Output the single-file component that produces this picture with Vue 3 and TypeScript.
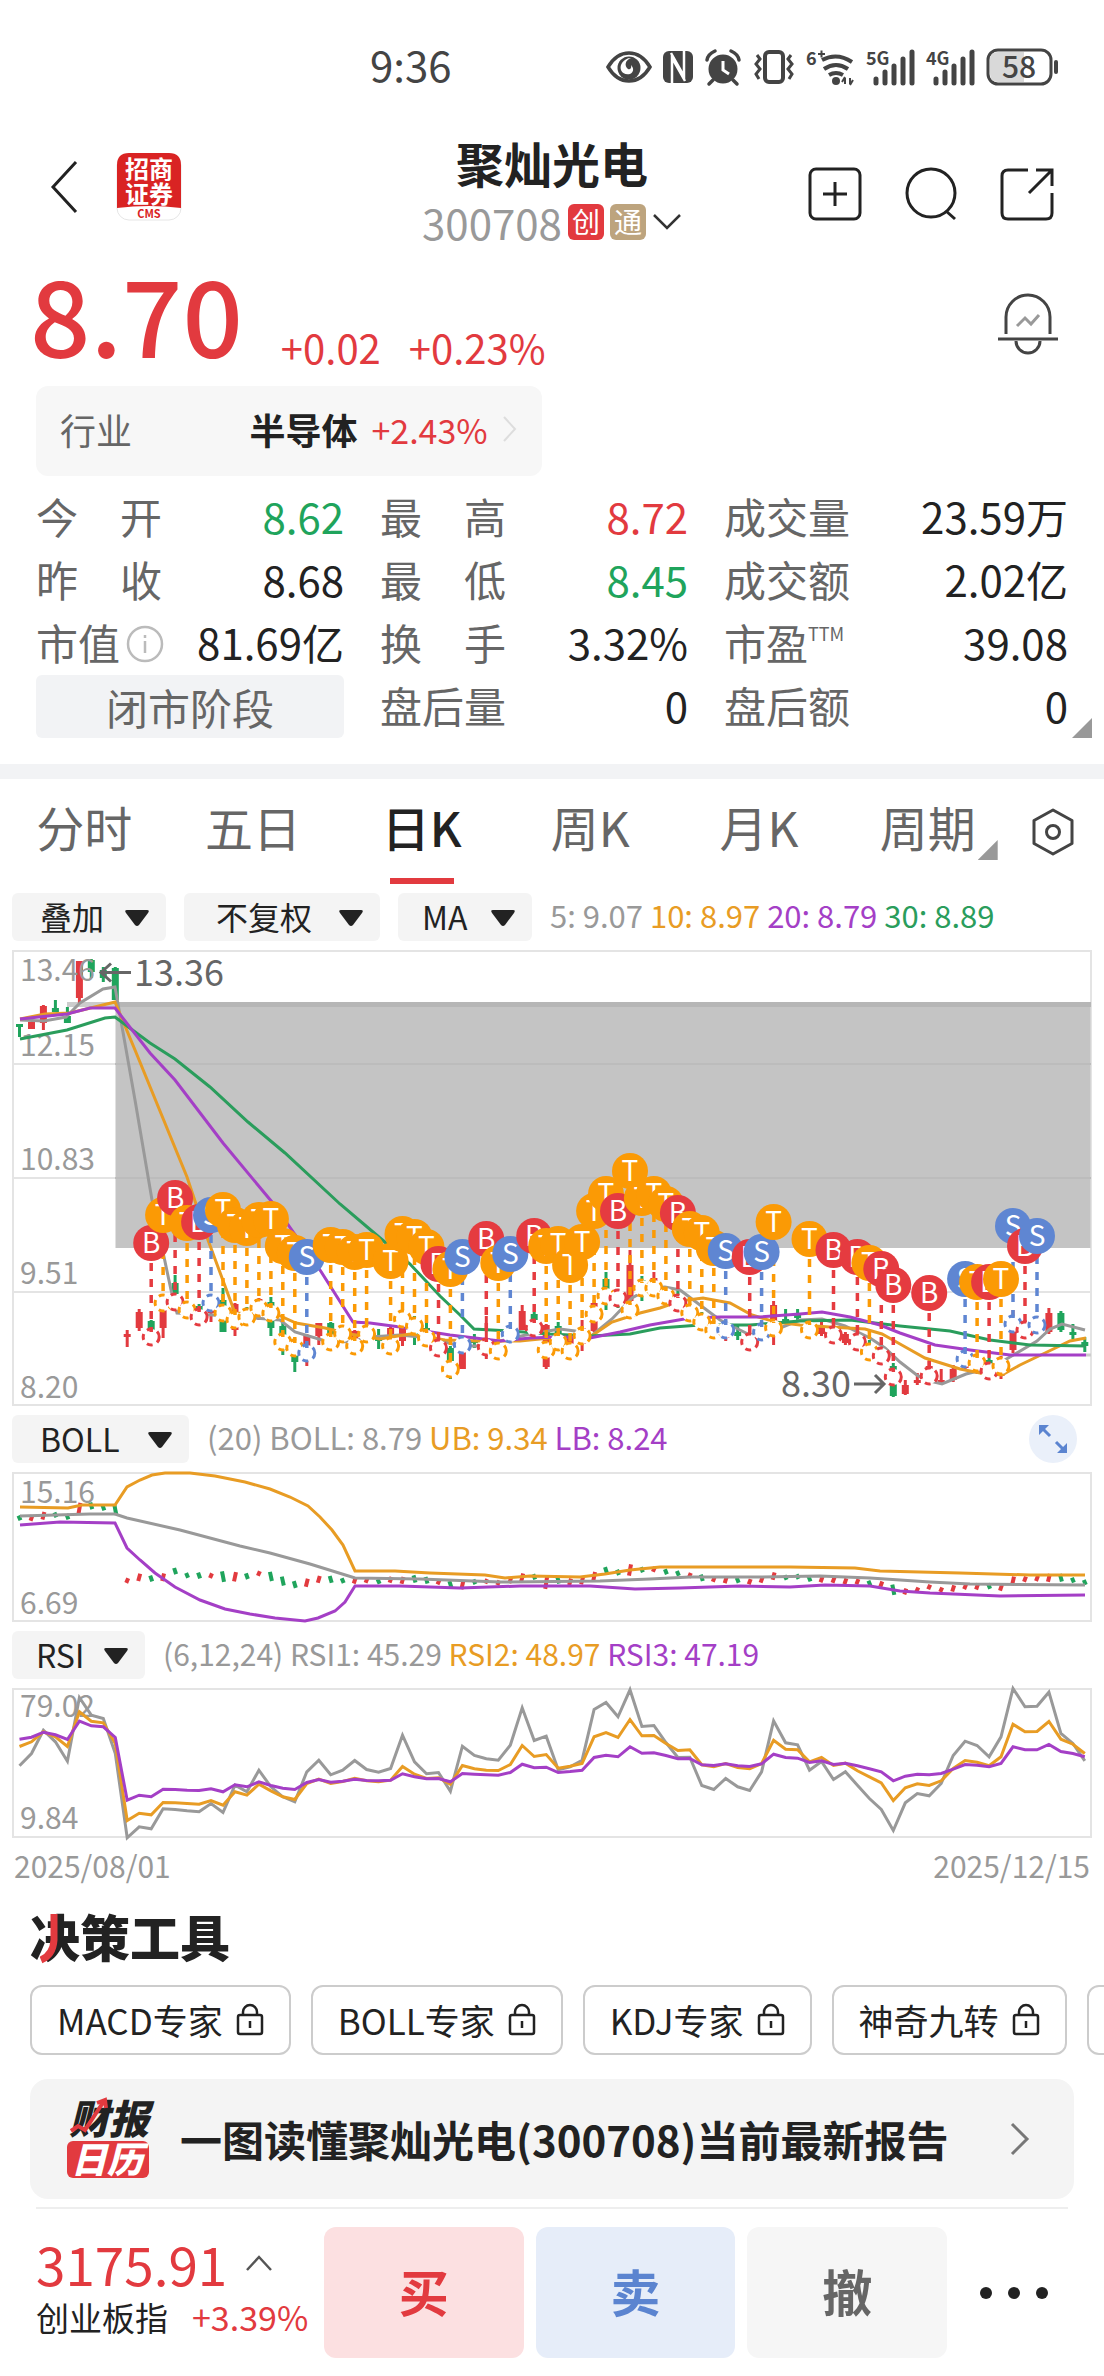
<script setup lang="ts">
type Side = 'B' | 'S' | 'T'
type Tone = 'up' | 'down'

interface Candle {
  x: number
  tone: Tone
  high: number
  top: number
  bottom: number
  low: number
}

interface Marker {
  x: number
  side: Side
  y: number
  foot: number
}

const FIRST_X = 19.5
const STEP = 11.97
const xAt = (i: number): number => Math.round((FIRST_X + STEP * i) * 10) / 10

// One row per trading day: tone, wick top, body top, body bottom, wick bottom.
const candleRows: [Tone, number, number, number, number][] = [
  ['down', 1024, 1024, 1027, 1037], ['up', 1022, 1022, 1029, 1029], ['up', 1005, 1006, 1023, 1030],
  ['down', 1000, 1008, 1012, 1012], ['down', 1007, 1016, 1023, 1023], ['up', 961, 961, 998, 1003],
  ['down', 959, 960, 972, 978], ['down', 967, 970, 978, 982], ['down', 967, 968, 1000, 1000],
  ['up', 1330, 1334, 1337, 1347], ['up', 1309, 1312, 1328, 1331], ['down', 1320, 1321, 1330, 1335],
  ['up', 1308, 1310, 1328, 1338], ['down', 1275, 1283, 1294, 1300], ['down', 1302, 1308, 1312, 1318],
  ['down', 1304, 1306, 1315, 1322], ['up', 1300, 1310, 1313, 1322], ['down', 1288, 1300, 1332, 1332],
  ['up', 1303, 1304, 1330, 1336], ['down', 1307, 1310, 1318, 1322], ['up', 1298, 1299, 1302, 1320],
  ['down', 1297, 1302, 1328, 1336], ['down', 1322, 1326, 1350, 1355], ['down', 1344, 1348, 1362, 1372],
  ['up', 1334, 1336, 1356, 1366], ['up', 1323, 1323, 1336, 1345], ['down', 1322, 1323, 1336, 1340],
  ['down', 1330, 1334, 1338, 1340], ['up', 1330, 1331, 1340, 1346], ['up', 1328, 1332, 1336, 1340],
  ['down', 1329, 1338, 1341, 1349], ['up', 1326, 1328, 1336, 1340], ['up', 1318, 1328, 1341, 1346],
  ['down', 1316, 1320, 1335, 1345], ['down', 1322, 1328, 1340, 1347], ['up', 1340, 1342, 1344, 1350],
  ['down', 1346, 1348, 1361, 1379], ['up', 1342, 1345, 1369, 1369], ['down', 1334, 1340, 1343, 1348],
  ['up', 1316, 1338, 1340, 1359], ['up', 1342, 1345, 1348, 1352], ['up', 1326, 1330, 1338, 1342],
  ['up', 1305, 1311, 1330, 1330], ['down', 1312, 1314, 1320, 1330], ['up', 1324, 1325, 1367, 1369],
  ['down', 1322, 1326, 1340, 1351], ['up', 1334, 1336, 1348, 1360], ['up', 1320, 1328, 1344, 1351],
  ['up', 1300, 1303, 1331, 1332], ['down', 1272, 1279, 1290, 1310], ['down', 1290, 1292, 1298, 1308],
  ['up', 1250, 1265, 1301, 1319], ['down', 1276, 1280, 1284, 1301], ['up', 1272, 1278, 1282, 1296],
  ['down', 1286, 1289, 1294, 1302], ['down', 1290, 1298, 1302, 1311], ['up', 1306, 1308, 1312, 1320],
  ['down', 1312, 1316, 1328, 1330], ['up', 1324, 1326, 1332, 1336], ['up', 1324, 1326, 1338, 1341],
  ['down', 1326, 1332, 1336, 1340], ['up', 1335, 1338, 1344, 1348], ['up', 1322, 1328, 1336, 1338],
  ['up', 1301, 1305, 1322, 1345], ['down', 1309, 1319, 1322, 1322], ['down', 1309, 1315, 1317, 1321],
  ['down', 1320, 1324, 1330, 1336], ['up', 1322, 1327, 1334, 1336], ['up', 1327, 1330, 1336, 1340],
  ['up', 1332, 1334, 1343, 1345], ['up', 1335, 1338, 1344, 1348], ['down', 1340, 1346, 1350, 1356],
  ['up', 1348, 1350, 1356, 1360], ['down', 1363, 1366, 1396, 1397], ['up', 1380, 1385, 1394, 1395],
  ['up', 1373, 1380, 1382, 1385], ['up', 1358, 1366, 1369, 1380], ['up', 1369, 1380, 1382, 1384],
  ['up', 1365, 1369, 1380, 1382], ['up', 1352, 1365, 1368, 1370], ['up', 1355, 1360, 1370, 1374],
  ['down', 1358, 1360, 1366, 1374], ['up', 1356, 1366, 1376, 1379], ['up', 1310, 1326, 1350, 1353],
  ['up', 1320, 1326, 1332, 1336], ['up', 1316, 1322, 1328, 1332], ['up', 1308, 1313, 1332, 1334],
  ['down', 1311, 1313, 1330, 1332], ['down', 1324, 1332, 1335, 1339], ['down', 1337, 1342, 1346, 1352],
]

const candles: Candle[] = candleRows.map(([tone, high, top, bottom, low], i) => ({
  x: xAt(i), tone, high, top, bottom, low,
}))

// Day index, marker letter, marker centre, centre of the ring on the candle.
const markerRows: [number, Side, number, number][] = [
  [11, 'B', 1243, 1337], [12, 'T', 1215, 1303], [13, 'B', 1198, 1302], [14, 'T', 1223, 1310],
  [15, 'B', 1222, 1317], [16, 'S', 1215, 1303], [17, 'T', 1210, 1313], [18, 'T', 1225, 1320],
  [19, 'T', 1228, 1317], [20, 'T', 1220, 1308], [21, 'T', 1219, 1313], [22, 'T', 1246, 1342],
  [23, 'T', 1253, 1348], [24, 'S', 1257, 1353], [26, 'T', 1245, 1342], [27, 'T', 1247, 1334],
  [28, 'T', 1252, 1346], [29, 'T', 1250, 1334], [31, 'T', 1261, 1346], [32, 'T', 1234, 1319],
  [33, 'T', 1237, 1326], [34, 'T', 1247, 1338], [35, 'B', 1264, 1348], [36, 'T', 1269, 1369],
  [37, 'S', 1257, 1345], [39, 'B', 1239, 1347], [40, 'T', 1263, 1351], [41, 'S', 1254, 1334],
  [43, 'B', 1236, 1328], [44, 'T', 1246, 1350], [45, 'T', 1244, 1342], [46, 'T', 1265, 1351],
  [47, 'T', 1242, 1336], [48, 'T', 1211, 1314], [49, 'T', 1194, 1296], [50, 'B', 1211, 1298],
  [51, 'T', 1171, 1310], [52, 'T', 1198, 1288], [53, 'T', 1194, 1288], [54, 'T', 1204, 1296],
  [55, 'B', 1213, 1303], [56, 'T', 1229, 1313], [57, 'T', 1233, 1322], [58, 'T', 1248, 1330],
  [59, 'S', 1251, 1330], [61, 'B', 1257, 1342], [62, 'S', 1252, 1332], [63, 'T', 1222, 1328],
  [66, 'T', 1239, 1330], [68, 'B', 1250, 1335], [70, 'B', 1257, 1342], [71, 'T', 1263, 1352],
  [72, 'B', 1269, 1356], [73, 'B', 1285, 1377], [76, 'B', 1293, 1376], [79, 'S', 1279, 1359],
  [80, 'T', 1282, 1363], [81, 'B', 1282, 1371], [82, 'T', 1279, 1366], [83, 'S', 1226, 1324],
  [84, 'B', 1246, 1330], [85, 'S', 1236, 1325],
]

const markers: Marker[] = markerRows.map(([i, side, y, foot]) => ({ x: xAt(i), side, y, foot }))

const movingAverages = [
  { name: 'grey', points: '20,1020 44,1021 66,1017 80,1003 103,989 115,987 135,1100 152,1200 171,1290 177,1313 230,1316 280,1320 295,1332 322,1340 350,1342 370,1337 400,1335 430,1338 460,1346 478,1346 500,1341 530,1334 560,1329 575,1331 590,1337 612,1319 632,1298 650,1288 665,1287 680,1290 700,1305 720,1320 750,1335 780,1328 800,1320 822,1319 845,1326 870,1338 885,1348 900,1362 918,1376 930,1381 942,1384 966,1374 990,1368 1010,1357 1037,1341 1050,1329 1062,1324 1085,1330' },
  { name: 'orange', points: '20,1019 45,1014 70,1013 115,1002 135,1050 187,1177 208,1240 235,1313 278,1315 296,1323 325,1328 350,1334 380,1339 410,1334 445,1340 480,1341 520,1341 560,1337 590,1337 612,1322 640,1313 660,1308 680,1301 703,1298 730,1303 752,1315 775,1322 800,1325 830,1327 865,1329 882,1334 900,1344 925,1358 960,1369 980,1373 1002,1375 1020,1365 1045,1353 1070,1341 1086,1338' },
  { name: 'green', points: '20,1039 67,1030 105,1018 115,1017 150,1043 175,1059 210,1087 248,1122 285,1153 340,1204 386,1243 410,1264 440,1296 460,1315 474,1329 510,1331 550,1334 590,1336 630,1334 660,1328 700,1325 750,1325 800,1321 850,1320 900,1326 950,1331 990,1340 1030,1345 1086,1346' },
  { name: 'purple', points: '20,1019 67,1014 90,1008 115,1008 150,1053 175,1080 223,1143 272,1202 320,1270 353,1322 370,1323 400,1327 450,1335 500,1341 530,1338 560,1337 590,1338 620,1332 650,1325 690,1318 720,1317 760,1317 800,1314 822,1312 850,1317 880,1325 900,1333 935,1345 970,1350 1010,1355 1086,1355' },
]

const bollLines = [
  { name: 'grey', points: '20,1516 90,1514 115,1514 127,1518 180,1530 240,1546 270,1553 310,1564 355,1578 420,1579 500,1582 600,1581 650,1579 690,1577 760,1577 820,1576 870,1578 930,1582 970,1584 1085,1585' },
  { name: 'orange', points: '20,1507 68,1508 82,1505 115,1505 127,1487 140,1480 152,1475 165,1473 190,1473 215,1476 245,1482 270,1489 290,1497 308,1506 320,1517 332,1530 343,1545 355,1571 395,1571 430,1573 485,1575 505,1578 530,1576 580,1577 605,1574 630,1570 660,1567 700,1567 790,1567 855,1568 880,1571 960,1573 1030,1575 1085,1575' },
  { name: 'purple', points: '20,1525 60,1522 115,1523 127,1548 140,1560 155,1573 175,1587 200,1600 225,1609 250,1614 275,1618 305,1621 318,1618 335,1611 345,1602 355,1586 400,1586 460,1588 520,1586 590,1586 635,1589 680,1588 740,1586 790,1587 825,1585 870,1586 900,1591 930,1593 1000,1596 1085,1595' },
]

// Price panel height to Bollinger panel height, through the price itself.
const toBoll = (y: number): number => {
  const price = 13.46 - (y - 950) / 86.5
  return Math.round((1473 + (15.16 - price) * 17.47) * 10) / 10
}
const bollBars = candles.map((c) => ({ x: c.x, tone: c.tone, y1: toBoll(c.top) - 2, y2: toBoll(c.bottom) + 2 }))

// Depth below the top of the RSI panel, three units to a pixel.
const rsiRows: { name: string; depth: number[] }[] = [
  { name: 'grey', depth: [232, 195, 125, 160, 218, 27, 80, 90, 195, 448, 415, 421, 361, 363, 367, 370, 345, 372, 290, 310, 245, 295, 325, 340, 250, 215, 259, 245, 216, 243, 251, 240, 140, 220, 256, 252, 308, 173, 201, 211, 215, 170, 58, 156, 143, 244, 235, 215, 63, 42, 85, 4, 114, 111, 162, 207, 206, 291, 303, 270, 295, 306, 250, 97, 163, 169, 245, 219, 273, 250, 290, 330, 363, 426, 343, 315, 322, 285, 201, 158, 171, 205, 145, 0, 55, 53, 11, 135, 165, 217] },
  { name: 'orange', depth: [174, 160, 130, 145, 174, 70, 98, 103, 165, 396, 374, 379, 342, 343, 345, 347, 336, 350, 310, 320, 287, 307, 325, 333, 285, 272, 285, 279, 269, 277, 280, 275, 234, 257, 270, 268, 287, 231, 241, 245, 246, 228, 171, 204, 198, 239, 233, 225, 145, 132, 147, 93, 142, 141, 165, 186, 184, 229, 235, 225, 237, 241, 225, 155, 182, 184, 220, 207, 231, 224, 247, 265, 283, 336, 298, 286, 291, 277, 240, 216, 221, 232, 205, 107, 130, 129, 99, 152, 167, 195] },
  { name: 'purple', depth: [152, 146, 131, 139, 153, 98, 112, 115, 147, 335, 320, 325, 302, 303, 305, 306, 301, 310, 289, 295, 280, 291, 299, 303, 282, 273, 281, 278, 272, 276, 277, 275, 256, 265, 271, 270, 280, 255, 257, 259, 260, 252, 227, 238, 236, 252, 249, 245, 207, 200, 205, 175, 194, 193, 201, 211, 210, 229, 231, 226, 232, 234, 226, 197, 207, 209, 222, 217, 228, 224, 232, 241, 250, 277, 263, 257, 259, 255, 242, 228, 230, 235, 225, 175, 184, 184, 168, 189, 195, 205] },
]
const rsiLines = rsiRows.map((row) => ({
  name: row.name,
  points: row.depth.map((d, i) => `${xAt(i)},${(1688.5 + d / 3).toFixed(1)}`).join(' '),
}))

const priceLabels = [
  { text: '13.46', y: 981 }, { text: '12.15', y: 1056 }, { text: '10.83', y: 1170 },
  { text: '9.51', y: 1284 }, { text: '8.20', y: 1398 },
]

const stats = [
  { label: '今开', value: '8.62', tone: 'down' },
  { label: '最高', value: '8.72', tone: 'up' },
  { label: '成交量', value: '23.59万', tone: '' },
  { label: '昨收', value: '8.68', tone: '' },
  { label: '最低', value: '8.45', tone: 'down' },
  { label: '成交额', value: '2.02亿', tone: '' },
  { label: '市值', value: '81.69亿', tone: '', info: true },
  { label: '换手', value: '3.32%', tone: '' },
  { label: '市盈', value: '39.08', tone: '', sup: 'TTM' },
]
const afterHours = [
  { label: '盘后量', value: '0' },
  { label: '盘后额', value: '0' },
]

const tabs = ['分时', '五日', '日K', '周K', '月K', '周期']
const overlays = [
  { name: '叠加', cls: 'w-overlay' },
  { name: '不复权', cls: 'w-adjust' },
  { name: 'MA', cls: 'w-ma' },
]
const experts = ['MACD专家', 'BOLL专家', 'KDJ专家', '神奇九转']
</script>

<template>
  <div class="page">
    <div class="status">
      <span class="clock">9:36</span>
      <div class="status-icons">
        <svg width="46" height="34" viewBox="0 0 46 34">
          <path d="M2 17C8 7 15 3 23 3s15 4 21 14c-6 10-13 14-21 14S8 27 2 17z" fill="none" stroke="#444" stroke-width="3.500" />
          <circle cx="23" cy="18" r="11.500" fill="#444" />
          <path d="M25 8c-6 2-7 8-3 11 2 1 4-1 3-4 3 3 3 7-1 9-7 2-12-5-8-11 2-3 5-5 9-5z" fill="#fff" />
        </svg>
        <svg width="32" height="34" viewBox="0 0 32 34">
          <rect x="1" y="1" width="30" height="32" rx="6" fill="#444" />
          <path d="M10 34V8l13 23M22 0v26L9 3" fill="none" stroke="#fff" stroke-width="2.500" />
        </svg>
        <svg width="38" height="36" viewBox="0 0 38 36">
          <circle cx="19" cy="20" r="14.500" fill="#444" />
          <path d="M3 11q1-6 8-9M35 11q-1-6-8-9M9 31l-4 4M29 31l4 4" fill="none" stroke="#444" stroke-width="3.500" stroke-linecap="round" />
          <path d="M19 12v9l6 4" fill="none" stroke="#fff" stroke-width="3" />
        </svg>
        <svg width="44" height="36" viewBox="0 0 44 36">
          <rect x="13" y="3" width="18" height="30" rx="4" fill="none" stroke="#444" stroke-width="4" />
          <path d="M5 6l3 4-4 5 4 5-4 5 3 5M39 6l-3 4 4 5-4 5 4 5-3 5" fill="none" stroke="#444" stroke-width="3" />
        </svg>
        <svg width="50" height="38" viewBox="0 0 50 38">
          <text x="0" y="17" class="tiny">6</text>
          <path d="M12 6h7M15.500 2.500v7" stroke="#444" stroke-width="2" />
          <path d="M16 12q15-8 30 2M18 21q12-8 24 0M23 27q7-4 14 0" fill="none" stroke="#444" stroke-width="4" />
          <circle cx="30" cy="33" r="4" fill="#444" />
          <path d="M39 30v6M44 30v6M36 34l3-5M47 32l-3 5" stroke="#444" stroke-width="2" />
        </svg>
        <svg width="50" height="38" viewBox="0 0 50 38">
          <text x="0" y="17" class="tiny">5G</text>
          <path d="M10 31v4M19 24v11M28 18v17M37 11v24M46 4v31" stroke="#444" stroke-width="5" stroke-linecap="round" />
        </svg>
        <svg width="50" height="38" viewBox="0 0 50 38">
          <text x="0" y="17" class="tiny">4G</text>
          <path d="M10 31v4M19 24v11M28 18v17M37 11v24M46 4v31" stroke="#444" stroke-width="5" stroke-linecap="round" />
        </svg>
        <svg width="74" height="38" viewBox="0 0 74 38">
          <rect x="2" y="2" width="63" height="34" rx="10" fill="#fff" stroke="#444" stroke-width="3" />
          <path d="M12 4h26v30H12q-8 0-8-8V12q0-8 8-8z" fill="#d9d9d9" />
          <path d="M70 14v10" stroke="#444" stroke-width="4" stroke-linecap="round" />
          <text x="33" y="30" text-anchor="middle" class="battery">58</text>
        </svg>
      </div>
    </div>

    <header class="header">
      <div class="header-left">
        <button class="icon" aria-label="返回">
          <svg width="28" height="54" viewBox="0 0 28 54"><path d="M26 2L3 27l23 25" fill="none" stroke="#222" stroke-width="3" /></svg>
        </button>
        <svg class="broker" width="66" height="68" viewBox="0 0 66 68">
          <rect x="1" y="1" width="64" height="66" rx="12" fill="#fff" stroke="#e6e6e6" />
          <path d="M13 0h40q12 0 12 12v43q-32-4-64 0V12Q1 0 13 0z" fill="#d92323" />
          <text x="33" y="25" text-anchor="middle" class="seal">招商</text>
          <text x="33" y="50" text-anchor="middle" class="seal">证券</text>
          <text x="33" y="65" text-anchor="middle" class="cms">CMS</text>
        </svg>
      </div>
      <div class="header-title">
        <h1>聚灿光电</h1>
        <div class="code">
          <span>300708</span>
          <span class="tag red-bg">创</span>
          <span class="tag gold-bg">通</span>
          <svg width="30" height="18" viewBox="0 0 30 18"><path d="M2 2l13 13L28 2" fill="none" stroke="#333" stroke-width="2.500" /></svg>
        </div>
      </div>
      <div class="header-right">
        <button class="icon" aria-label="添加自选">
          <svg width="54" height="54" viewBox="0 0 54 54" fill="none" stroke="#222" stroke-width="3">
            <rect x="2" y="2" width="50" height="50" rx="6" /><path d="M27 15v24M15 27h24" />
          </svg>
        </button>
        <button class="icon" aria-label="搜索">
          <svg width="54" height="54" viewBox="0 0 54 54" fill="none" stroke="#222" stroke-width="3">
            <circle cx="27" cy="26" r="24" /><path d="M42 44l9 8" />
          </svg>
        </button>
        <button class="icon" aria-label="分享">
          <svg width="54" height="54" viewBox="0 0 54 54" fill="none" stroke="#222" stroke-width="3">
            <path d="M28 3H8Q2 3 2 9v37q0 6 6 6h38q6 0 6-6V26M36 3h16v16M52 3L29 26" />
          </svg>
        </button>
      </div>
    </header>

    <section class="quote">
      <div class="price-row">
        <span class="price">8.70</span>
        <span class="change">+0.02</span>
        <span class="change">+0.23%</span>
        <button class="icon bell" aria-label="预警">
          <svg width="60" height="64" viewBox="0 0 60 64" fill="none" stroke="#444" stroke-width="3">
            <path d="M8 42V25a22 22 0 0 1 44 0v17M0 47h60M18 49a12 12 0 0 0 24 0" />
            <path d="M19 34l8-8 6 6 8-9" stroke="#999" />
          </svg>
        </button>
      </div>
      <a href="#" class="industry">
        <span class="muted">行业</span>
        <b>半导体</b>
        <span class="up">+2.43%</span>
        <svg width="16" height="28" viewBox="0 0 16 28"><path d="M2 2l11 12L2 26" fill="none" stroke="#ddd" stroke-width="2" /></svg>
      </a>
      <div class="stats">
        <div v-for="s in stats" :key="s.label" class="stat">
          <span class="stat-label" :class="{ wide: s.label.length === 2 && !s.info && !s.sup }">
            <template v-if="s.label.length === 2 && !s.info && !s.sup">
              <span>{{ s.label[0] }}</span><span>{{ s.label[1] }}</span>
            </template>
            <template v-else>{{ s.label }}</template>
            <svg v-if="s.info" width="38" height="38" viewBox="0 0 38 38" fill="none" stroke="#bbb" stroke-width="2.500">
              <circle cx="19" cy="19" r="17" /><path d="M19 16v12M19 10v3" />
            </svg>
            <span v-if="s.sup" class="sup">{{ s.sup }}</span>
          </span>
          <span :class="s.tone">{{ s.value }}</span>
        </div>
        <button class="phase">闭市阶段</button>
        <div v-for="s in afterHours" :key="s.label" class="stat">
          <span class="stat-label">{{ s.label }}</span>
          <span>{{ s.value }}</span>
        </div>
        <i class="corner"></i>
      </div>
    </section>

    <nav class="tabs">
      <button v-for="t in tabs" :key="t" class="tab" :class="{ active: t === '日K' }">
        <span>{{ t }}<i v-if="t === '周期'" class="corner"></i></span>
      </button>
      <button class="icon hex" aria-label="设置">
        <svg width="42" height="48" viewBox="0 0 42 48" fill="none" stroke="#444" stroke-width="3">
          <path d="M21 2l19 10.500v23L21 46 2 35.500v-23z" stroke-linejoin="round" /><circle cx="21" cy="24" r="6.500" />
        </svg>
      </button>
    </nav>

    <section class="charts">
      <div class="tool-row">
        <span v-for="o in overlays" :key="o.name" class="pick" :class="o.cls">
          <select :aria-label="o.name"><option>{{ o.name }}</option></select>
          <svg width="26" height="18" viewBox="0 0 26 18"><path d="M3 1h20q3 0 1 3L15 16q-2 2-4 0L2 4Q0 1 3 1z" fill="#222" /></svg>
        </span>
        <p class="legend"><span class="grey">5: 9.07</span> <span class="orange">10: 8.97</span> <span class="purple">20: 8.79</span> <span class="green">30: 8.89</span></p>
      </div>

      <svg class="chart" viewBox="12 950 1080 456">
        <rect x="13" y="951" width="1078" height="454" class="frame" />
        <rect x="115.500" y="1002" width="975" height="246" fill="#c4c4c4" />
        <path d="M67 1004.500h48" stroke="#ccc" stroke-width="5" />
        <path d="M115 1004.500h976" stroke="#b6b6b6" stroke-width="5" />
        <path d="M13 1064h102M13 1178h102M13 1292h1078" stroke="#e4e4e4" stroke-width="2" />
        <path d="M115 1064h976M115 1178h976" stroke="#bcbcbc" stroke-width="2" />
        <g v-for="(c, i) in candles" :key="i" :class="c.tone">
          <path :d="`M${c.x} ${c.high}V${c.low}`" stroke="currentColor" stroke-width="3" />
          <rect :x="c.x - 3.5" :y="c.top" width="7" :height="Math.max(c.bottom - c.top, 3)" fill="currentColor" />
        </g>
        <text v-for="l in priceLabels" :key="l.text" x="20" :y="l.y" class="axis">{{ l.text }}</text>
        <polyline v-for="m in movingAverages" :key="m.name" :points="m.points" class="line" :class="m.name" />
        <path d="M131 972.500h-30M111 963.500l-10 9 10 9" class="arrow" />
        <text x="134" y="986" class="extreme">13.36</text>
        <path d="M854 1384h30M875 1375l9 9-9 9" class="arrow" />
        <text x="781" y="1397" class="extreme">8.30</text>
        <g v-for="(m, i) in markers" :key="`ring-${i}`" :class="`side-${m.side}`">
          <circle :cx="m.x" :cy="m.foot" r="8" fill="#fff" stroke="currentColor" stroke-width="3" stroke-dasharray="6 5" />
          <path :d="`M${m.x} ${m.y + 20}V${m.foot - 5}`" stroke="currentColor" stroke-width="3.500" stroke-dasharray="8 8" />
        </g>
        <g v-for="(m, i) in markers" :key="`mark-${i}`" :class="`side-${m.side}`">
          <circle :cx="m.x" :cy="m.y" r="18" fill="currentColor" />
          <text :x="m.x" :y="m.y + 10" text-anchor="middle" class="letter">{{ m.side }}</text>
        </g>
        <path d="M1086 1355h5" stroke="#ccc" stroke-width="3" />
      </svg>

      <div class="tool-row">
        <span class="pick w-boll">
          <select aria-label="BOLL"><option>BOLL</option></select>
          <svg width="26" height="18" viewBox="0 0 26 18"><path d="M3 1h20q3 0 1 3L15 16q-2 2-4 0L2 4Q0 1 3 1z" fill="#222" /></svg>
        </span>
        <p class="legend"><span class="grey">(20) BOLL: 8.79</span> <span class="orange">UB: 9.34</span> <span class="purple">LB: 8.24</span></p>
        <button class="icon expand" aria-label="全屏">
          <svg width="48" height="48" viewBox="0 0 48 48" fill="none" stroke="#5b84d0" stroke-width="3">
            <circle cx="24" cy="24" r="24" fill="#eaf0fa" stroke="none" />
            <path d="M21 21l-9-9M27 27l9 9" /><path d="M10 10h10l-10 10zM38 38H28l10-10z" fill="#5b84d0" stroke="none" />
          </svg>
        </button>
      </div>

      <svg class="chart" viewBox="12 1472 1080 150">
        <rect x="13" y="1473" width="1078" height="148" class="frame" />
        <text x="20" y="1503" class="axis">15.16</text>
        <text x="20" y="1614" class="axis">6.69</text>
        <path v-for="(b, i) in bollBars" :key="i" :class="b.tone" :d="b.tone === 'up' ? `M${b.x - 1} ${b.y2}L${b.x + 1} ${b.y1}` : `M${b.x - 1} ${b.y1}L${b.x + 1} ${b.y2}`" stroke="currentColor" stroke-width="4" />
        <polyline v-for="m in bollLines" :key="m.name" :points="m.points" class="line" :class="m.name" />
      </svg>

      <div class="tool-row">
        <span class="pick w-rsi">
          <select aria-label="RSI"><option>RSI</option></select>
          <svg width="26" height="18" viewBox="0 0 26 18"><path d="M3 1h20q3 0 1 3L15 16q-2 2-4 0L2 4Q0 1 3 1z" fill="#222" /></svg>
        </span>
        <p class="legend dense"><span class="grey">(6,12,24) RSI1: 45.29</span> <span class="orange">RSI2: 48.97</span> <span class="purple">RSI3: 47.19</span></p>
      </div>

      <svg class="chart" viewBox="12 1688 1080 150">
        <rect x="13" y="1689" width="1078" height="148" class="frame" />
        <text x="20" y="1717" class="axis">79.02</text>
        <text x="20" y="1829" class="axis">9.84</text>
        <polyline v-for="m in rsiLines" :key="m.name" :points="m.points" class="line" :class="m.name" />
      </svg>
      <div class="dates"><span>2025/08/01</span><span>2025/12/15</span></div>
    </section>

    <section class="tools">
      <h2>
        决策工具
        <svg width="30" height="52" viewBox="0 0 30 52"><path d="M22 1v26Q21 42 9 47" fill="none" stroke="#e23a3f" stroke-width="7" /></svg>
      </h2>
      <div class="chips">
        <button v-for="e in experts" :key="e" class="chip">
          {{ e }}
          <svg width="28" height="32" viewBox="0 0 28 32" fill="none" stroke="#222" stroke-width="2.500">
            <rect x="2" y="11" width="24" height="19" rx="2" /><path d="M7 11V8a7 7 0 0 1 14 0v3M14 17v7" />
          </svg>
        </button>
        <button class="chip" aria-label="更多"></button>
      </div>
      <a href="#" class="banner">
        <svg width="86" height="84" viewBox="0 0 86 84">
          <text x="3" y="37" class="report">财报</text>
          <rect x="1" y="44" width="82" height="37" rx="6" fill="#e23a3f" />
          <text x="5" y="76" class="calendar">日历</text>
          <path d="M5 34l7-5 7 4L38 4M31 6l8-3 1 8" fill="none" stroke="#e23a3f" stroke-width="4" />
        </svg>
        <b>一图读懂聚灿光电(300708)当前最新报告</b>
        <svg width="20" height="34" viewBox="0 0 20 34"><path d="M2 2l15 15L2 32" fill="none" stroke="#777" stroke-width="3" /></svg>
      </a>
    </section>

    <footer class="trade">
      <div class="index">
        <div class="index-value">3175.91
          <svg width="28" height="18" viewBox="0 0 28 18"><path d="M2 16L14 3l12 13" fill="none" stroke="#555" stroke-width="2.500" /></svg>
        </div>
        <div class="index-name"><span>创业板指</span><span class="index-change">+3.39%</span></div>
      </div>
      <button class="action buy">买</button>
      <button class="action sell">卖</button>
      <button class="action cancel">撤</button>
      <button class="icon more" aria-label="更多操作">
        <svg width="72" height="16" viewBox="0 0 72 16" fill="#222"><circle cx="8" cy="8" r="6" /><circle cx="36" cy="8" r="6" /><circle cx="64" cy="8" r="6" /></svg>
      </button>
    </footer>
  </div>
</template>

<style>
body { background: #fff; }
</style>

<style scoped>
.page { font-family: "Noto Sans CJK SC", "Noto Sans", sans-serif; color: #222; overflow: hidden; }
* { box-sizing: border-box; }
button, select { font-family: inherit; color: inherit; border: 0; margin: 0; padding: 0; background: none; }
a { color: inherit; text-decoration: none; }
svg { display: block; flex: none; overflow: visible; }
h1, h2, p { margin: 0; }
.icon { display: flex; align-items: center; justify-content: center; }

.up { color: #e23a3f; }
.down { color: #1fa45c; }
.muted { color: #666; }
.grey { color: #999; }
.orange { color: #e89c24; }
.purple { color: #a43fc6; }
.green { color: #2a9d5c; }

.status { display: grid; grid-template-columns: 1fr auto; align-items: center; padding: 40px 44px 0 370px; height: 92px; }
.clock { font-size: 42px; line-height: 48px; padding-bottom: 6px; color: #444; }
.status-icons { display: flex; align-items: center; gap: 10px; }
.tiny { font-size: 18px; font-weight: 700; fill: #444; }
.battery { font-size: 30px; font-weight: 500; fill: #444; }

.header { display: grid; grid-template-columns: 1fr auto 1fr; align-items: center; margin-top: 40px; padding: 0 50px; height: 124px; }
.header-left { display: flex; align-items: center; gap: 38px; margin-bottom: 16px; }
.seal { font-size: 24px; font-weight: 700; fill: #fff; }
.cms { font-size: 11px; font-weight: 700; fill: #d92323; }
.header-title { display: flex; flex-direction: column; align-items: center; margin-bottom: 6px; }
.header-title h1 { font-size: 48px; line-height: 60px; font-weight: 700; }
.code { display: flex; align-items: center; gap: 6px; font-size: 42px; line-height: 60px; color: #999; }
.tag { width: 36px; height: 36px; border-radius: 6px; color: #fff; font-size: 28px; line-height: 34px; text-align: center; }
.red-bg { background: #e23a3f; }
.gold-bg { background: #bda47e; }
.header-right { display: flex; justify-content: flex-end; gap: 42px; margin-bottom: 2px; }

.quote { padding: 0 36px 26px; }
.price-row { display: flex; align-items: flex-end; gap: 28px; height: 112px; color: #e23a3f; }
.price { font-size: 106px; line-height: 112px; font-weight: 500; margin: 0 10px 0 -6px; }
.change { font-size: 40px; line-height: 42px; }
.bell { margin: 0 10px 12px auto; }
.industry { display: flex; align-items: center; width: 49%; height: 90px; margin-top: 18px; padding: 0 24px 4px; border-radius: 12px; background: #f7f7f7; font-size: 36px; }
.industry b { margin-left: auto; }
.industry .up { margin: 0 14px; font-size: 34px; }
.stats { position: relative; display: grid; grid-template-columns: 308fr 308fr 344fr; column-gap: 36px; grid-auto-rows: 63px; margin-top: 10px; font-size: 42px; line-height: 60px; }
.stat { display: flex; justify-content: space-between; white-space: nowrap; }
.stat-label { display: flex; align-items: center; height: 60px; color: #666; }
.stat-label.wide { width: 126px; justify-content: space-between; }
.stat-label svg { margin: 4px 0 0 6px; }
.sup { font-size: 18px; line-height: 22px; margin-bottom: 18px; }
.phase { background: #f2f3f5; border-radius: 6px; font-size: 42px; line-height: 60px; color: #666; }
.corner { position: absolute; width: 20px; height: 20px; background: #999; clip-path: polygon(100% 0, 100% 100%, 0 100%); }
.stats .corner { right: -24px; bottom: 0; }

.tabs { display: flex; padding-right: 10px; border-top: 15px solid #f2f3f5; }
.tab { flex: 1; display: flex; flex-direction: column; align-items: center; height: 105px; font-size: 48px; line-height: 94px; color: #666; }
.tab span { position: relative; white-space: nowrap; }
.tab .corner { right: -22px; bottom: 13px; }
.tab.active { color: #222; font-weight: 500; }
.tab.active::after { content: ""; width: 64px; height: 6px; margin-top: 5px; background: #e23a3f; }
.hex { width: 82px; }

.charts { padding: 9px 12px 0; }
.tool-row { display: flex; align-items: center; height: 48px; gap: 18px; }
.pick { position: relative; flex: none; height: 48px; border-radius: 6px; background: #f4f4f4; }
.pick select { width: 100%; height: 48px; appearance: none; font-size: 32px; padding: 0 0 4px 28px; }
.pick svg { position: absolute; right: 16px; top: 16px; pointer-events: none; }
.w-overlay { width: 154px; }
.w-adjust { width: 196px; }
.w-adjust select { padding-left: 32px; }
.w-ma { width: 134px; }
.w-ma select { padding-left: 24px; }
.w-boll { width: 177px; }
.w-rsi { width: 133px; }
.w-rsi select { padding-left: 24px; }
.legend { font-size: 31px; line-height: 44px; padding-bottom: 4px; white-space: nowrap; }
.legend.dense { font-size: 30px; }
.expand { margin-left: auto; margin-right: 15px; }
.chart { width: 100%; height: auto; margin: 9px 0; }
.frame { fill: none; stroke: #e4e4e4; stroke-width: 2; }
.axis { font-size: 30px; fill: #999; }
.extreme { font-size: 36px; fill: #666; }
.arrow { fill: none; stroke: #666; stroke-width: 3; }
.line { fill: none; stroke: currentColor; stroke-width: 3; }
.letter { font-size: 28px; fill: #fff; }
.side-B { color: #e53b40; }
.side-S { color: #5f86d2; }
.side-T { color: #fb9a05; }
.dates { display: flex; justify-content: space-between; padding: 0 2px; font-size: 30px; line-height: 36px; color: #999; }

.tools { padding: 20px 30px 0; }
.tools h2 { position: relative; font-size: 50px; line-height: 64px; font-weight: 900; }
.tools h2 svg { position: absolute; left: 2px; top: 10px; }
.chips { display: flex; gap: 20px; margin: 18px -30px 0 0; overflow: hidden; }
.chip { display: flex; flex: none; align-items: center; gap: 13px; height: 70px; min-width: 120px; padding: 0 25px; border: 2px solid #ccc; border-radius: 12px; font-size: 35px; line-height: 62px; background: #fff; white-space: nowrap; }
.banner { display: flex; align-items: center; height: 120px; margin-top: 24px; padding: 0 44px 0 36px; border-radius: 18px; background: #f4f4f4; font-size: 42px; white-space: nowrap; }
.banner b { flex: 1; margin-left: 28px; padding-bottom: 2px; }
.report { font-size: 40px; font-weight: 900; font-style: italic; fill: #222; }
.calendar { font-size: 36px; font-weight: 900; font-style: italic; fill: #fff; }

.trade { display: flex; gap: 12px; margin: 8px 36px 0; padding: 18px 0; border-top: 2px solid #eee; }
.index { width: 276px; flex: none; padding-top: 4px; }
.index-value { display: flex; align-items: center; gap: 18px; font-size: 53px; line-height: 64px; color: #e23a3f; }
.index-name { display: flex; align-items: center; gap: 24px; font-size: 33px; line-height: 44px; white-space: nowrap; }
.index-change { font-size: 34px; color: #e23a3f; }
.action { flex: 200; height: 131px; padding-bottom: 6px; border-radius: 12px; font-size: 50px; font-weight: 700; }
.buy { background: #fce0e1; color: #e23a3f; }
.sell { background: #e6edf9; color: #5b84d0; }
.cancel { background: #f6f6f6; color: #666; }
.more { flex: 109; }
</style>
